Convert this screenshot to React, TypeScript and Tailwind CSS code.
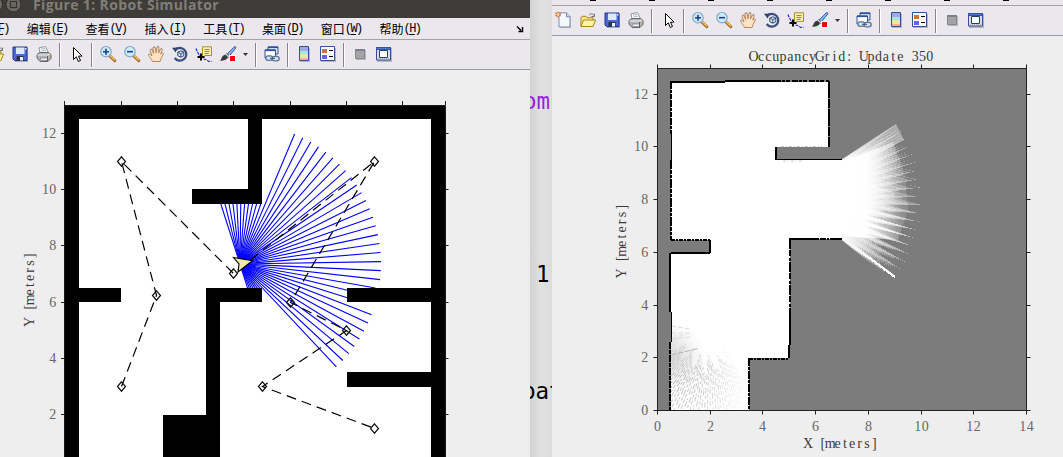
import React from "react";

/* ---------- toolbar icons ---------- */

function Icon({ children }: { children: React.ReactNode }) {
  return (
    <svg className="mx-1 h-4 w-4 shrink-0 overflow-visible" viewBox="0 0 16 16" fill="none">
      {children}
    </svg>
  );
}

const NewIcon = () => (
  <Icon>
    <path d="M4 1.5h7.5l3.5 4V16H4z" fill="#b9bcc6" />
    <path d="M3 .8h7.5L14 4.5V15H3z" fill="#f3f8fd" stroke="#7d8fb0" />
    <path d="M10.5.8v4H14" fill="#cfdcf0" stroke="#6f86b4" />
    <circle cx="2" cy="2.5" r="2.2" fill="#f6cf9a" stroke="#d2582e" strokeWidth="1.2" strokeDasharray="1.4 .8" />
  </Icon>
);

const OpenIcon = () => (
  <Icon>
    <path d="M1 14.5V5.5l1-1.2h4l1 1.4h6v3" fill="#f7e68c" stroke="#a98514" />
    <path d="M1 14.5 3.6 8h12L13 14.5z" fill="#fdf3a6" stroke="#a98514" />
    <path d="M9 3.2c1.6-2 4-1.8 5 .5M14.5 1.5v3h-3" stroke="#6a7180" />
  </Icon>
);

const SaveIcon = () => (
  <Icon>
    <path d="M2 2h14v14H3z" fill="#a9acbd" />
    <path d="M1 1h14v13.5H2.5L1 13z" fill="#4a67d6" stroke="#27368c" />
    <path d="M4 1.5h8.5V8H4z" fill="#dce9fb" />
    <path d="M4.5 10h7v4.5h-7z" fill="#2b3247" />
    <path d="M8 11h3v3.5H8z" fill="#eef2fa" />
    <path d="M13 2h1.5v1.5H13z" fill="#dce9fb" />
  </Icon>
);

const PrintIcon = () => (
  <Icon>
    <path d="M4 7 3 1.8 9.5.5 12.5 7z" fill="#fbfbfd" stroke="#9297a3" />
    <path d="M5 3.2 9 2.4M5.5 5l4.5-1" stroke="#b0b5bf" />
    <path d="M1 8.5 4 6.5h8.5l2.5 2v4L12 15.5H4L1 12z" fill="#b3b5b9" stroke="#66686e" />
    <path d="M1.5 9h9.8l3-.8" stroke="#ededed" />
    <path d="M4 12h7.5v2.5h-6z" fill="#f4f4f4" stroke="#777a80" strokeWidth=".7" />
    <path d="M11.5 10v5" stroke="#5d5f65" />
    <path d="M12.5 10h1.5" stroke="#e2c13f" />
  </Icon>
);

const PointerIcon = () => (
  <Icon>
    <path d="M5.5 1.5v12l2.8-2.7 2 4.7 2.2-1-2-4.4h3.6z" fill="#fff" stroke="#000" />
  </Icon>
);

function Magnifier({ plus }: { plus?: boolean }) {
  return (
    <Icon>
      <path d="m9.8 9.8 5 4.8" stroke="#a97432" strokeWidth="3.2" strokeLinecap="round" />
      <path d="m9.8 9 4.8 4.8" stroke="#f0c162" strokeWidth="1.5" strokeLinecap="round" />
      <circle cx="6" cy="5.7" r="5.2" fill="#c9ecfa" stroke="#83a6cd" strokeWidth="1.2" />
      <path d={plus ? "M3 5.7h6M6 2.7v6" : "M3 5.7h6"} stroke="#203f88" strokeWidth="1.6" />
    </Icon>
  );
}

const HandIcon = () => (
  <Icon>
    <path
      d="M4.5 15.5C3.6 13 .8 10.5.5 8.8c0-1 1.3-1.3 2.2-.3L4 10 2 4.5c-.3-1.4 1.3-1.9 2-.6l1.7 3.6L4.9 2c0-1.5 1.8-1.6 2.2-.2l1 5L8.9 1.3c.3-1.3 2-1 2 .3L10.5 7l1.9-4c.7-1.2 2-.6 1.8.7L12.7 8l1.2-1c.9-.5 1.9.3 1.4 1.2l-2.1 4.1-1 3.2z"
      fill="#fde3c4"
      stroke="#a87348"
      strokeWidth=".8"
    />
    <path d="M4 3.5V2.8M7 1.2h-.8M10.5.9h-.8M13.7 2.8h-.7" stroke="#4c64a3" />
  </Icon>
);

const RotateIcon = () => (
  <Icon>
    <path d="M3.3 3.8A6.4 6.4 0 1 1 2.7 12" stroke="#3a4f7a" strokeWidth="2.2" />
    <path d="M0 1.8 6 1.4 3.6 6.6z" fill="#32456f" />
    <path d="m8.8 4.8 3 1.3v3.6l-3 1.5-3-1.5V6.1z" fill="#d6e6f5" stroke="#31466f" />
    <path d="m5.8 6.3 3 1.3 3-1.3M8.8 7.6V11" stroke="#31466f" strokeWidth=".9" />
  </Icon>
);

const DataCursorIcon = () => (
  <Icon>
    <path d="M0 2.5c1 3 2.4 5 4 8.2M7.5 13l3 .8 2 1.6h3" stroke="#2424ee" strokeWidth="1.1" strokeDasharray="3 1" />
    <path d="M6.5.8h9v8.7H8.7L6.5 12z" fill="#fbf1a4" stroke="#a98f2d" />
    <path d="M8.5 3.5h5M8.5 5.5h5M8.5 7.5h4" stroke="#8d8660" />
    <path d="M5 7.5v7M1.5 11h7" stroke="#000" strokeWidth="2" />
  </Icon>
);

const BrushIcon = () => (
  <Icon>
    <path d="m7 8.2 7.3-7.4c1-.7 2 .2 1.4 1.3L9.4 9.8z" fill="#8fb2ec" stroke="#3a5aa2" />
    <path d="m6.5 7.5 3 2.8-1.6 1.8-3-2.6z" fill="#d8d8d8" stroke="#666" strokeWidth=".7" />
    <path d="M5.4 9c1.6.3 2.6 1.5 2.2 2.8-1 2.3-4.2 3.3-7.8 3 1.6-.8 1.5-3 2.7-4.6C3.3 9.2 4.3 8.9 5.4 9z" fill="#393939" />
    <path d="M9 9h7v7H9z" fill="#fff" />
    <path d="M10 10h5v5h-5z" fill="#f30000" />
  </Icon>
);

const LinkIcon = () => (
  <Icon>
    <path d="M4 1h10v7H4z" fill="#d7e5f6" stroke="#36538e" />
    <path d="M4 1.3h10" stroke="#2d4f9f" strokeWidth="1.6" />
    <path d="M1 4h10.5v8H1z" fill="#fafcff" stroke="#36538e" />
    <path d="M1 4.3h10.5" stroke="#2d4f9f" strokeWidth="1.6" />
    <rect x="1.8" y="9.8" width="7" height="4.6" rx="2.3" fill="#d2e2f0" stroke="#5d7593" strokeWidth="1.3" />
    <rect x="8.2" y="10.3" width="7" height="4.6" rx="2.3" fill="#d2e2f0" stroke="#5d7593" strokeWidth="1.3" />
    <path d="M6 12.3h5" stroke="#364f71" />
  </Icon>
);

const ColorbarIcon = () => (
  <Icon>
    <path d="M4 2h10v14H4z" fill="#b5b5c0" />
    <path d="M3.5.5h9v14h-9z" fill="#9fa7e6" />
    <path d="M4 5h8v3H4z" fill="#a1e5e6" />
    <path d="M4 8h8v4H4z" fill="#eee5a0" />
    <path d="M4 12h8v2.5H4z" fill="#efb68f" />
    <path d="M3.5.5h9v14h-9z" stroke="#34508d" />
  </Icon>
);

const LegendIcon = () => (
  <Icon>
    <path d="M1 2h15v14H1z" fill="#b5b5c0" />
    <path d="M.5.5h14v14H.5z" fill="#f8faff" stroke="#34508d" />
    <path d="M2 3h5v4H2z" fill="#d76c48" />
    <path d="M2 9h5v4H2z" fill="#6060ff" />
    <path d="M9 4.5h4M9 10.5h4" stroke="#000" />
  </Icon>
);

const HideToolsIcon = () => (
  <Icon>
    <path d="M4 4h10v10H4z" fill="#b7b7bd" />
    <path d="M3.5 3.5h9v9h-9z" fill="#a4a4a4" stroke="#858890" />
    <path d="M3 4h10" stroke="#7b808b" strokeWidth="2" />
  </Icon>
);

const ShowToolsIcon = () => (
  <Icon>
    <path d="M1 2h15v14H1z" fill="#b5b5c0" />
    <path d="M.5 1.5h14v12.5H.5z" fill="#dcdde2" stroke="#34508d" />
    <path d="M0 2.5h15" stroke="#34549c" strokeWidth="3" />
    <path d="M1 2.5h13" stroke="#5379cb" />
    <path d="M3.5 4.5h8v7h-8z" fill="#fff" stroke="#263c71" />
    <path d="M2 12.8h11" stroke="#9c9da5" strokeDasharray="1 1" />
  </Icon>
);

const Separator = () => (
  <div className="mt-0.5 flex h-6 w-2 shrink-0 justify-center">
    <div className="w-px bg-[#858585]" />
    <div className="w-px bg-white" />
  </div>
);

function Toolbar() {
  return (
    <div className="flex h-[30px] shrink-0 items-center border-b border-[#9b9b9d] bg-[#ebe8ed] pb-px">
      <NewIcon />
      <OpenIcon />
      <SaveIcon />
      <PrintIcon />
      <Separator />
      <PointerIcon />
      <Separator />
      <Magnifier plus />
      <Magnifier />
      <HandIcon />
      <RotateIcon />
      <DataCursorIcon />
      <BrushIcon />
      <svg className="h-4 w-3 shrink-0" viewBox="0 0 12 16">
        <path d="M3 7h5L5.5 10z" fill="#333" />
      </svg>
      <Separator />
      <LinkIcon />
      <Separator />
      <ColorbarIcon />
      <LegendIcon />
      <Separator />
      <HideToolsIcon />
      <ShowToolsIcon />
    </div>
  );
}

/* Fixed-pitch serif label: every glyph is centred in its own cell. */
const PITCH = 7.34;
function Label({ x, y, children, dark }: { x: number; y: number; children: string; dark?: boolean }) {
  const xs = Array.from(children, (_, i) => (x + (i + 0.5) * PITCH).toFixed(2)).join(" ");
  return (
    <text
      x={xs}
      y={y}
      textAnchor="middle"
      xmlSpace="preserve"
      className="font-['Liberation_Serif',serif] text-[14px]"
      fill={dark ? "#3a3a3a" : "#666"}
    >
      {children}
    </text>
  );
}

/* ---------- robot simulator plot ---------- */

type Rect = [number, number, number, number];
const walls: Rect[] = [
  [64, 105, 381, 14],
  [64, 105, 15, 352],
  [431, 105, 14, 352],
  [248, 119, 14, 85],
  [192, 189, 70, 15],
  [79, 288, 42, 14],
  [206, 288, 56, 14],
  [206, 302, 14, 155],
  [163, 415, 43, 42],
  [347, 288, 84, 14],
  [347, 372, 84, 15],
];

const SX = 240;
const SY = 264;
const rays = Array.from({ length: 50 }, (_, i) => {
  const a = ((107.7 - i * 3.68) * Math.PI) / 180;
  let r = 0;
  while (r < 140.7) {
    const x = SX + r * Math.cos(a);
    const y = SY - r * Math.sin(a);
    if (walls.some(([wx, wy, w, h]) => x >= wx && x <= wx + w && y >= wy && y <= wy + h)) break;
    r += 0.5;
  }
  return [SX + r * Math.cos(a), SY - r * Math.sin(a)];
});

const waypoints = [
  [121.5, 386.5],
  [156.5, 295.5],
  [121.5, 161.5],
  [233.5, 273.5],
  [374.5, 161.5],
  [290.5, 302.5],
  [346.5, 330.5],
  [262.5, 386.5],
  [374.5, 428.5],
];

function SimulatorPlot() {
  return (
    <svg className="block h-[387px] w-[530px]" viewBox="0 70 530 387">
      <rect x="64" y="105" width="381" height="352" fill="#fff" />
      <g stroke="#0000ff" strokeWidth="1.1">
        {rays.map(([x, y], i) => (
          <line key={i} x1={SX} y1={SY} x2={x} y2={y} />
        ))}
      </g>
      {walls.map(([x, y, w, h], i) => (
        <rect key={i} x={x} y={y} width={w} height={h} />
      ))}
      <path d="M445.5 457V105.5H64.5V457" fill="none" stroke="#1a1a1a" />
      <polyline
        points={waypoints.map((p) => p.join(",")).join(" ")}
        fill="none"
        stroke="#000"
        strokeWidth="1.2"
        strokeDasharray="10 6"
      />
      {waypoints.map(([x, y], i) => (
        <path key={i} d={`M${x} ${y - 4.7}l4 4.7-4 4.7-4-4.7z`} fill="none" stroke="#111" strokeWidth="1.2" />
      ))}
      <path d="M233.5 257.5 252.5 260.8 238 272 239 264z" fill="#eee7a8" stroke="#000" strokeWidth="1.1" />
      <path
        d="M64.5 101v4M121.5 101v4M177.5 101v4M233.5 101v4M290.5 101v4M346.5 101v4M402.5 101v4M445.5 101v4"
        stroke="#222"
      />
      {[12, 10, 8, 6, 4, 2].map((n, i) => {
        const y = 133.5 + i * 56.2;
        return (
          <g key={n}>
            <path d={`M61 ${Math.floor(y) + 0.5}h4M445 ${Math.floor(y) + 0.5}h3.5`} stroke="#222" />
            <Label x={56.5 - String(n).length * PITCH} y={y + 4.5}>{String(n)}</Label>
          </g>
        );
      })}
      <g transform="translate(34 325.5) rotate(-90)">
        <Label x={0} y={0} dark>Y [meters]</Label>
      </g>
    </svg>
  );
}

/* ---------- occupancy grid plot ---------- */

const FREE = "M671 82L725 81.5H828V147H776V159.5H842V239H790V358H749V410H671V253.5H710V240H671Z";

/* Beams of successive scans, limited to what each pose sees through the doorway. */
const scans = Array.from({ length: 12 }, (_, n) => {
  const k = 11 - n;
  const ox = 787 - k * 3.6;
  const oy = 200 - k * 1.5;
  const top = Math.atan2(159 - oy, 842 - ox);
  const bottom = Math.atan2(239.5 - oy, 842 - ox);
  const wedges: string[] = [];
  for (let j = 0; j < 50; j++) {
    const a = ((-90 + j * 3.67 + 0.2 + k * 0.22) * Math.PI) / 180;
    if (a < top - 0.01 || a > bottom + 0.02) continue;
    const px = -Math.sin(a) * 6.5;
    const py = Math.cos(a) * 6.5;
    const tx = ox + 134 * Math.cos(a);
    const ty = oy + 134 * Math.sin(a);
    wedges.push(
      `M${(ox + px).toFixed(1)} ${(oy + py).toFixed(1)}L${tx.toFixed(1)} ${ty.toFixed(1)}L${(ox - px).toFixed(1)} ${(oy - py).toFixed(1)}z`
    );
  }
  return wedges.join("");
});

const streaks = Array.from({ length: 60 }, (_, i) => {
  const a = ((55 + i * 2.05) * Math.PI) / 180;
  const start = 24 + ((i * 17) % 19);
  return [
    710 + start * Math.cos(a),
    331 + start * Math.sin(a),
    710 + 100 * Math.cos(a),
    331 + 100 * Math.sin(a),
  ];
});

function OccupancyPlot() {
  return (
    <svg className="block h-[421px] w-[511px]" viewBox="552 36 511 421">
      <defs>
        <radialGradient id="streak" gradientUnits="userSpaceOnUse" cx="674" cy="385" r="76">
          <stop offset="0" stopColor="#b4b4b4" />
          <stop offset=".45" stopColor="#d2d2d2" />
          <stop offset="1" stopColor="#fff" />
        </radialGradient>
        <radialGradient id="shade" gradientUnits="userSpaceOnUse" cx="670" cy="358" r="36">
          <stop offset="0" stopColor="#888" stopOpacity=".36" />
          <stop offset="1" stopColor="#aaa" stopOpacity="0" />
        </radialGradient>
        <linearGradient id="core" gradientUnits="userSpaceOnUse" x1="842" y1="0" x2="902" y2="0">
          <stop offset="0" stopColor="#fff" />
          <stop offset=".4" stopColor="#fff" stopOpacity=".95" />
          <stop offset="1" stopColor="#fff" stopOpacity=".15" />
        </linearGradient>
        <clipPath id="freeClip">
          <path d={FREE} />
        </clipPath>
        <clipPath id="doorway">
          <path d="M842 159.5 898 122H940V290H903L842 240z" />
        </clipPath>
      </defs>
      <rect x="657" y="68" width="370" height="343" fill="#7c7c7c" />

      {/* partially observed sensor fan */}
      <g clipPath="url(#doorway)">
        {scans.map((d, i) => (
          <path key={i} d={d} fill="#fff" fillOpacity={i === 11 ? 0.4 : 0.24} shapeRendering="crispEdges" />
        ))}
        <path d="M842 162 893 142 905 175 908 210 898 240 842 236z" fill="url(#core)" />
        <path d="M842 159.5 896 124 904 140 842 170z" fill="#fff" fillOpacity=".38" />
      </g>
      <path d="M843 238.500 895 277" stroke="#fbfbfb" strokeWidth="2.200" shapeRendering="crispEdges" />

      {/* explored area */}
      <path d={FREE} fill="#fff" shapeRendering="crispEdges" />
      <g clipPath="url(#freeClip)">
        <circle cx="670" cy="358" r="36" fill="url(#shade)" />
        {streaks.map(([x1, y1, x2, y2], i) => (
          <line
            key={i}
            x1={x1}
            y1={y1}
            x2={x2}
            y2={y2}
            stroke="url(#streak)"
            strokeDasharray={["4 2", "3 3 6 2", "2 1 5 4"][i % 3]}
            strokeDashoffset={(i * 7) % 11}
          />
        ))}
        <path d="M671 355 698 348.5" stroke="#b5b5b5" strokeDasharray="6 1" />
        <path d="M671 326 690 329M671 333 692 333M671 339 690 337" stroke="#ddd" strokeDasharray="5 2" />
      </g>
      <g fill="none" stroke="#000" strokeWidth="2" shapeRendering="crispEdges">
        <path d="M670 82H725M725 81H775" />
        <path d="M775 81H829" strokeDasharray="6 1 3 1 4 2" />
        <path d="M829 81V147" strokeDasharray="17 1 9 1" />
        <path d="M776 147V160M776 159.5H842" strokeWidth="1.5" />
        <path d="M671 82V134" strokeDasharray="7 1 3 1 5 1" />
        <path d="M671.5 134V160" strokeWidth="1" />
        <path d="M671 160V240" strokeDasharray="9 1 4 1 3 1" />
        <path d="M671 240H710" strokeWidth="1.5" strokeDasharray="4 1 2 1" />
        <path d="M709.5 240V253M671 253H710M670 253V312" />
        <path d="M671.5 312V342" strokeWidth="1" />
        <path d="M670 342V410" strokeDasharray="7 1 4 1" />
        <path d="M790 239V310" strokeDasharray="10 1 6 2 3 1" />
        <path d="M790 310V345M789 345V358" />
        <path d="M789 239H842" strokeDasharray="30 1 6 1 2 1" />
        <path d="M749 358.5H789" strokeDasharray="4 1 2 1" />
        <path d="M749 358V410" strokeDasharray="8 1 3 1" />
      </g>
      <path d="M781 146.5H822M783 161H804" stroke="#ccc" strokeDasharray="3 2 1 2" />

      {/* axes */}
      <path d="M657.5 410.5V68.5H1026.5V410.5Z" fill="none" stroke="#222" />
      {[0, 2, 4, 6, 8, 10, 12, 14].map((n) => {
        const x = Math.floor(657.5 + n * 26.37) + 0.5;
        return (
          <g key={n}>
            <path d={`M${x} 64.5v4M${x} 410.5v4`} stroke="#222" />
            <Label x={x - (String(n).length * PITCH) / 2} y={431}>{String(n)}</Label>
          </g>
        );
      })}
      {[0, 2, 4, 6, 8, 10, 12].map((n) => {
        const y = Math.floor(410.5 - n * 26.37) + 0.5;
        return (
          <g key={n}>
            <path d={`M653.5 ${y}h4M1026.5 ${y}h4`} stroke="#222" />
            <Label x={648.5 - String(n).length * PITCH} y={y + 4.5}>{String(n)}</Label>
          </g>
        );
      })}
      <Label x={750} y={61} dark>OccupancyGrid: Update 350</Label>
      <Label x={804.5} y={448} dark>X [meters]</Label>
      <g transform="translate(626 277) rotate(-90)">
        <Label x={0} y={0} dark>Y [meters]</Label>
      </g>
    </svg>
  );
}

/* ---------- windows ---------- */

const menus: [string, string][] = [
  ["文件", "F"],
  ["编辑", "E"],
  ["查看", "V"],
  ["插入", "I"],
  ["工具", "T"],
  ["桌面", "D"],
  ["窗口", "W"],
  ["帮助", "H"],
];

function SimulatorWindow() {
  return (
    <section className="flex h-full w-[530px] shrink-0 flex-col overflow-hidden bg-[#eeeeee]">
      <header className="flex h-[18px] shrink-0 items-start overflow-hidden bg-[#3d3c38]">
        <svg className="h-[18px] w-[33px] shrink-0" viewBox="0 0 33 18">
          <g fill="#6a6861" stroke="#2e2d2a">
            <circle cx="-5" cy="4.5" r="7.5" />
            <circle cx="13.5" cy="4.5" r="7.5" />
          </g>
          <rect x="10.5" y="1.5" width="6" height="6" fill="none" stroke="#35342f" strokeWidth="1.2" />
        </svg>
        <h1 className="-mt-[5px] font-['Open_Sans',sans-serif] text-[14px] leading-[20px] font-bold tracking-[0.36px] whitespace-nowrap text-[#817e77]">
          Figure 1: Robot Simulator
        </h1>
      </header>
      <nav className="flex h-[22px] shrink-0 items-center border-b border-[#a4a4a6] bg-[#ebe8ed]">
        <ul className="-ml-[32px] flex shrink-0 gap-[18.8px]">
          {menus.map(([label, key]) => (
            <li key={key} className="flex w-10 items-center whitespace-nowrap text-black">
              <span className="font-['Noto_Sans_CJK_SC',sans-serif] text-[12px] leading-[18px]">{label}</span>
              <span className="font-['Liberation_Mono',monospace] text-[12px] leading-[18px] tracking-[-1.6px]">
                (<span className="underline underline-offset-2">{key}</span>)
              </span>
            </li>
          ))}
        </ul>
        <svg className="mr-1.5 ml-auto h-2 w-2 shrink-0" viewBox="0 0 8 8">
          <path d="m1 1.5 4 4M6.5 2v4.5H2.5" fill="none" stroke="#000" strokeWidth="1.4" />
        </svg>
      </nav>
      <div className="-ml-10 shrink-0">
        <Toolbar />
      </div>
      <SimulatorPlot />
    </section>
  );
}

function EditorStrip() {
  return (
    <div className="flex h-full w-[22px] shrink-0 flex-col overflow-hidden bg-linear-to-r from-[#d2d2d2] via-[#e1e1e1] to-[#dcdcdc] font-['DejaVu_Sans_Mono',monospace] text-[22.5px] leading-[28px] whitespace-nowrap text-black">
      <span className="mt-[87px] -ml-[7px] text-[#9a1ee0]">om</span>
      <span className="mt-[145px] ml-[6px]">1</span>
      <span className="mt-[89px] -ml-[8px]">pat</span>
    </div>
  );
}

function OccupancyWindow() {
  return (
    <section className="flex h-full w-[511px] shrink-0 flex-col overflow-hidden bg-[#eeeeee]">
      <div className="flex h-[6px] shrink-0 gap-[53px] border-b border-[#a4a4a6] bg-[#ebe8ed] pl-[38px]">
        {menus.map(([, key]) => (
          <div key={key} className="h-px w-[6px] bg-black" />
        ))}
      </div>
      <Toolbar />
      <OccupancyPlot />
    </section>
  );
}

export default function App() {
  return (
    <main className="flex h-[457px] w-[1063px] overflow-hidden bg-[#eeeeee]">
      <SimulatorWindow />
      <EditorStrip />
      <OccupancyWindow />
    </main>
  );
}
